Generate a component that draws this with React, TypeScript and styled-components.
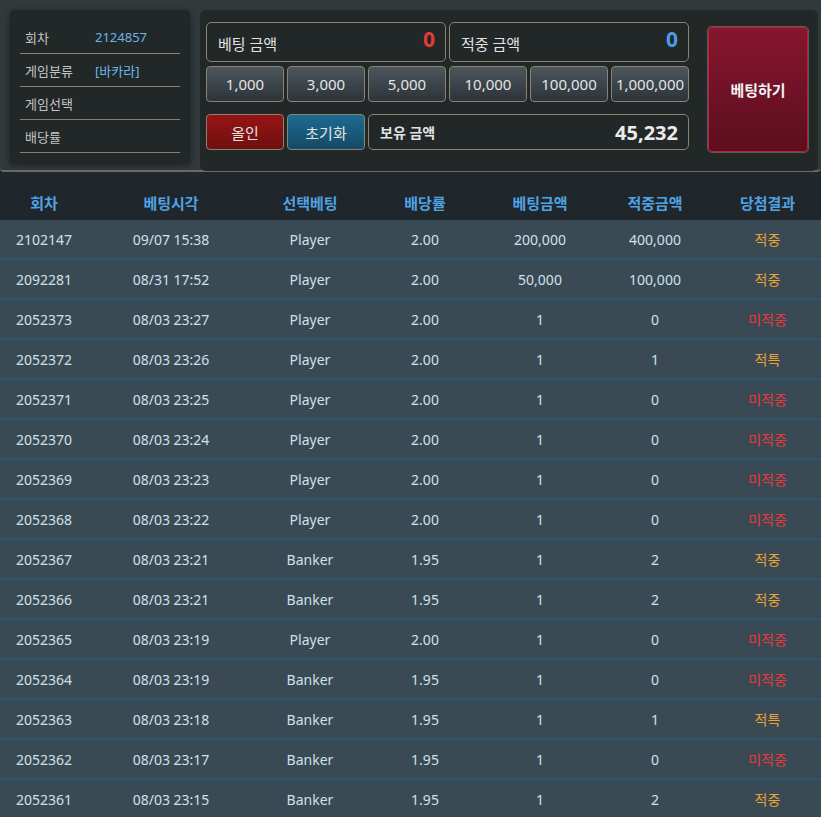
import React from "react";
import styled, { createGlobalStyle } from "styled-components";

const GlobalStyle = createGlobalStyle`
  html, body {
    margin: 0;
    padding: 0;
    background: #232729;
    font-family: "Noto Sans", "Noto Sans CJK KR", sans-serif;
  }
`;

const Page = styled.div`
  width: 821px;
  display: flex;
  flex-direction: column;
`;

const TopPanel = styled.div`
  display: flex;
  gap: 10px;
  height: 172px;
  padding: 10px 3px 0 10px;
  box-sizing: border-box;
  background: #31393c;
  border-bottom: 2px solid #6a6a66;
  border-radius: 0 0 4px 4px;
`;

const InfoBox = styled.div`
  width: 180px;
  height: 153px;
  box-sizing: border-box;
  padding: 11px 10px 10px;
  background: #222728;
  border-radius: 4px;
  box-shadow: 0 2px 6px rgba(0, 0, 0, 0.45);
`;

const InfoRow = styled.div`
  display: flex;
  align-items: center;
  height: 33px;
  box-sizing: border-box;
  padding-left: 5px;
  border-bottom: 1px solid #8a8070;
  font-size: 13px;
`;

const InfoLabel = styled.span`
  width: 70px;
  color: #c4c4c4;
`;

const InfoValue = styled.span`
  color: #6fb4e8;
`;

const BetPanel = styled.div`
  flex: 1;
  height: 161px;
  box-sizing: border-box;
  padding: 12px 10px 0 6px;
  display: flex;
  gap: 19px;
  background: #222728;
  border-radius: 6px;
`;

const BetControls = styled.div`
  width: 483px;
  display: flex;
  flex-direction: column;
`;

const Row = styled.div<{ $mt?: number }>`
  display: flex;
  gap: 3px;
  margin-top: ${(p) => p.$mt ?? 0}px;
`;

const AmountBox = styled.div`
  flex: 1;
  height: 40px;
  box-sizing: border-box;
  display: flex;
  justify-content: space-between;
  padding: 0 10px 0 11px;
  border: 1px solid #8c8271;
  border-radius: 5px;
`;

const AmountLabel = styled.span`
  padding-top: 10px;
  font-size: 15px;
  color: #e2e2e2;
`;

const AmountValue = styled.span<{ $color: string }>`
  padding-top: 2px;
  font-size: 21px;
  font-weight: 700;
  color: ${(p) => p.$color};
`;

const ChipButton = styled.button<{ $variant?: "chip" | "red" | "blue" }>`
  width: 78px;
  height: 36px;
  box-sizing: border-box;
  margin: 0;
  padding: 0;
  border: 1px solid #8c8271;
  border-radius: 4px;
  font-family: inherit;
  font-size: 15px;
  color: #e4e4e4;
  cursor: pointer;
  background: ${(p) =>
    p.$variant === "red"
      ? "linear-gradient(#981414, #6f1010)"
      : p.$variant === "blue"
      ? "linear-gradient(#1e6b92, #154965)"
      : "linear-gradient(#4b565d, #2d3439)"};
`;

const HoldBox = styled(AmountBox)`
  height: 36px;
  align-items: center;
`;

const HoldLabel = styled.span`
  font-size: 14px;
  font-weight: 700;
  color: #e2e2e2;
`;

const HoldValue = styled.span`
  font-size: 20px;
  font-weight: 700;
  color: #ececec;
`;

const BetButton = styled.button`
  width: 100px;
  height: 125px;
  margin-top: 5px;
  box-sizing: border-box;
  border: 1px solid #b52433;
  border-radius: 4px;
  box-shadow: 0 0 0 1px #5d5a55;
  background: linear-gradient(#861530, #5c0f1f);
  font-family: inherit;
  font-size: 15px;
  font-weight: 700;
  color: #f2f2f2;
  cursor: pointer;
`;

const cols = "88px 166px 112px 118px 112px 118px 107px";

const Table = styled.div`
  margin-top: 12px;
`;

const HeaderRow = styled.div`
  display: grid;
  grid-template-columns: ${cols};
  height: 36px;
  align-items: center;
  background: #1f262c;
`;

const HeaderCell = styled.div`
  text-align: center;
  font-size: 15px;
  font-weight: 700;
  color: #4fa3e2;
`;

const BodyRow = styled.div`
  display: grid;
  grid-template-columns: ${cols};
  height: 40px;
  box-sizing: border-box;
  align-items: center;
  background: #394a54;
  border-bottom: 2px solid #2c5570;
`;

const Cell = styled.div<{ $color?: string }>`
  text-align: center;
  font-size: 14px;
  color: ${(p) => p.$color ?? "#cfe0ec"};
`;

const rows: [string, string, string, string, string, string, string][] = [
  ["2102147", "09/07 15:38", "Player", "2.00", "200,000", "400,000", "적중"],
  ["2092281", "08/31 17:52", "Player", "2.00", "50,000", "100,000", "적중"],
  ["2052373", "08/03 23:27", "Player", "2.00", "1", "0", "미적중"],
  ["2052372", "08/03 23:26", "Player", "2.00", "1", "1", "적특"],
  ["2052371", "08/03 23:25", "Player", "2.00", "1", "0", "미적중"],
  ["2052370", "08/03 23:24", "Player", "2.00", "1", "0", "미적중"],
  ["2052369", "08/03 23:23", "Player", "2.00", "1", "0", "미적중"],
  ["2052368", "08/03 23:22", "Player", "2.00", "1", "0", "미적중"],
  ["2052367", "08/03 23:21", "Banker", "1.95", "1", "2", "적중"],
  ["2052366", "08/03 23:21", "Banker", "1.95", "1", "2", "적중"],
  ["2052365", "08/03 23:19", "Player", "2.00", "1", "0", "미적중"],
  ["2052364", "08/03 23:19", "Banker", "1.95", "1", "0", "미적중"],
  ["2052363", "08/03 23:18", "Banker", "1.95", "1", "1", "적특"],
  ["2052362", "08/03 23:17", "Banker", "1.95", "1", "0", "미적중"],
  ["2052361", "08/03 23:15", "Banker", "1.95", "1", "2", "적중"],
];

const headers = ["회차", "베팅시각", "선택베팅", "배당률", "베팅금액", "적중금액", "당첨결과"];
const chips = ["1,000", "3,000", "5,000", "10,000", "100,000", "1,000,000"];

export default function App() {
  return (
    <Page>
      <GlobalStyle />
      <TopPanel>
        <InfoBox>
          <InfoRow>
            <InfoLabel>회차</InfoLabel>
            <InfoValue>2124857</InfoValue>
          </InfoRow>
          <InfoRow>
            <InfoLabel>게임분류</InfoLabel>
            <InfoValue>[바카라]</InfoValue>
          </InfoRow>
          <InfoRow>
            <InfoLabel>게임선택</InfoLabel>
          </InfoRow>
          <InfoRow>
            <InfoLabel>배당률</InfoLabel>
          </InfoRow>
        </InfoBox>

        <BetPanel>
          <BetControls>
            <Row>
              <AmountBox>
                <AmountLabel>베팅 금액</AmountLabel>
                <AmountValue $color="#e23b3b">0</AmountValue>
              </AmountBox>
              <AmountBox>
                <AmountLabel>적중 금액</AmountLabel>
                <AmountValue $color="#4a9de2">0</AmountValue>
              </AmountBox>
            </Row>
            <Row $mt={4}>
              {chips.map((c) => (
                <ChipButton key={c}>{c}</ChipButton>
              ))}
            </Row>
            <Row $mt={12}>
              <ChipButton $variant="red">올인</ChipButton>
              <ChipButton $variant="blue">초기화</ChipButton>
              <HoldBox>
                <HoldLabel>보유 금액</HoldLabel>
                <HoldValue>45,232</HoldValue>
              </HoldBox>
            </Row>
          </BetControls>
          <BetButton>베팅하기</BetButton>
        </BetPanel>
      </TopPanel>

      <Table>
        <HeaderRow>
          {headers.map((h) => (
            <HeaderCell key={h}>{h}</HeaderCell>
          ))}
        </HeaderRow>
        {rows.map((r) => (
          <BodyRow key={r[0]}>
            {r.slice(0, 6).map((v, i) => (
              <Cell key={i}>{v}</Cell>
            ))}
            <Cell $color={r[6] === "미적중" ? "#e8383a" : "#f0a232"}>{r[6]}</Cell>
          </BodyRow>
        ))}
      </Table>
    </Page>
  );
}
